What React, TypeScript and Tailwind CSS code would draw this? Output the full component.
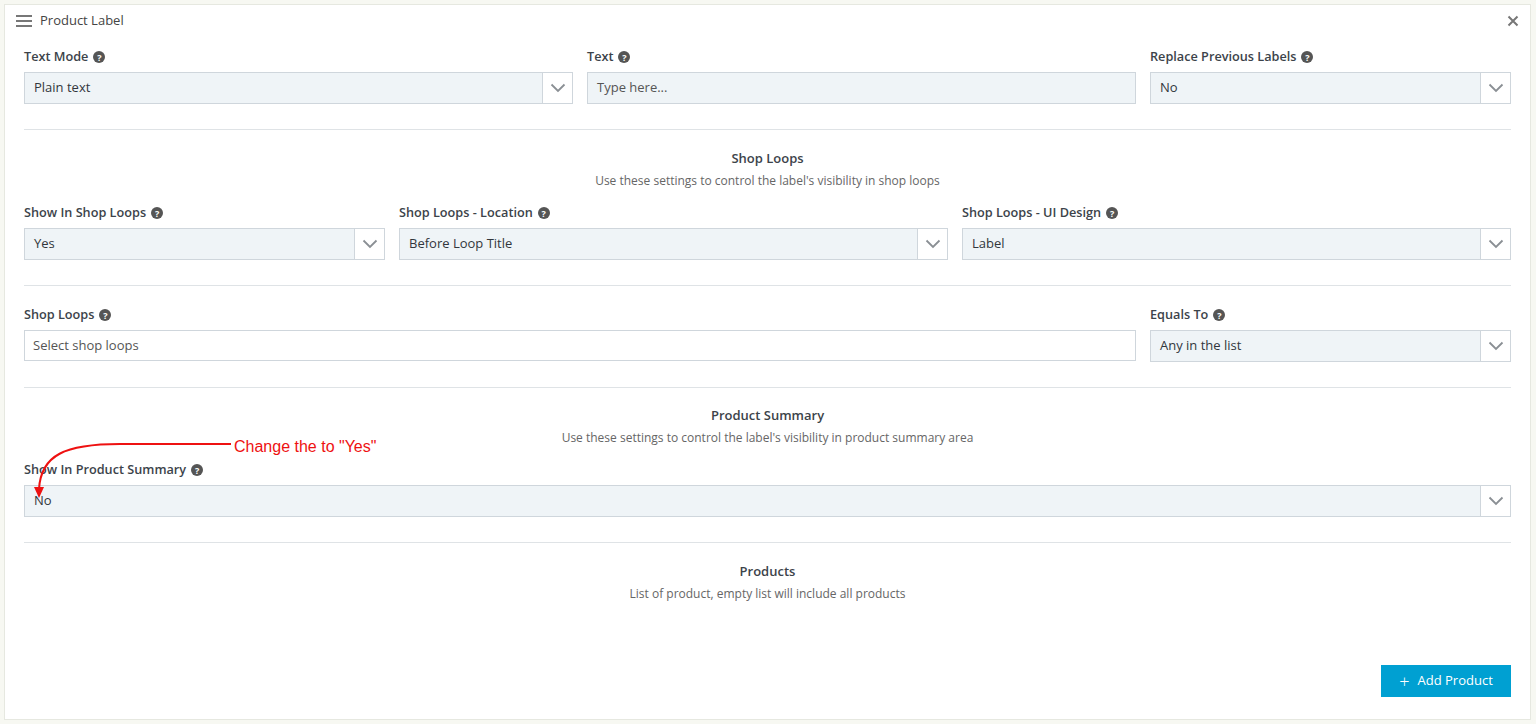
import React from "react";

const Help = () => (
  <span className="inline-flex items-center justify-center w-[12px] h-[12px] rounded-full bg-[#555] text-white text-[9px] font-bold leading-none ml-[5px]">?</span>
);

const Label = ({ t }: { t: string }) => (
  <div className="flex items-center h-[16px] mb-[7px] text-[12.7px] font-semibold text-[#3c434a]">{t}<Help /></div>
);

const Chevron = () => (
  <svg width="16" height="10" viewBox="0 0 16 10"><path d="M1.5 1.5 L8 8 L14.5 1.5" fill="none" stroke="#8a8f94" strokeWidth="1.8" /></svg>
);

const Select = ({ v }: { v: string }) => (
  <div className="flex h-[32px] border border-[#cfd6dc] bg-[#eff4f7]">
    <div className="flex-1 flex items-center px-[9px] text-[13px] text-[#32373c]">{v}</div>
    <div className="w-[30px] border-l border-[#cfd6dc] bg-white flex items-center justify-center"><Chevron /></div>
  </div>
);

const Field = ({ l, v }: { l: string; v: string }) => (
  <div><Label t={l} /><Select v={v} /></div>
);

const Heading = ({ t, s }: { t: string; s: string }) => (
  <div className="text-center">
    <div className="text-[13px] font-semibold text-[#3c434a] leading-[16px]">{t}</div>
    <div className="text-[12px] text-[#666] leading-[16px] mt-[7px]">{s}</div>
  </div>
);

const Hr = () => <div className="border-t border-[#dfe3e6]" />;

export default function App() {
  return (
    <div className="w-[1536px] h-[724px] bg-[#f7f8f2] p-[4px] pr-[5px]" style={{ fontFamily: '"Open Sans", sans-serif' }}>
      <div className="relative h-[716px] bg-white border border-[#e6e8e0] px-[19px]">
        <div className="flex items-center h-[32px] -mx-[8px]">
          <svg width="16" height="14" viewBox="0 0 16 14" className="mr-[8px]"><path d="M0 2h16M0 7h16M0 12h16" stroke="#777" strokeWidth="2" /></svg>
          <span className="text-[13px] text-[#444]">Product Label</span>
          <span className="ml-auto text-[#777]">
            <svg width="12" height="12" viewBox="0 0 12 12"><path d="M1.5 1.5l9 9M10.5 1.5l-9 9" stroke="#777" strokeWidth="2" /></svg>
          </span>
        </div>
        <div className="grid grid-cols-[549fr_549fr_361fr] gap-x-[14px] pt-[12px]">
          <Field l="Text Mode" v="Plain text" />
          <div>
            <Label t="Text" />
            <div className="flex items-center h-[32px] border border-[#cfd6dc] bg-[#eff4f7] px-[9px] text-[13px] text-[#555]">Type here...</div>
          </div>
          <Field l="Replace Previous Labels" v="No" />
        </div>
        <div className="pt-[25px] pb-[20px]"><Hr /></div>
        <Heading t="Shop Loops" s="Use these settings to control the label's visibility in shop loops" />
        <div className="grid grid-cols-[361fr_549fr_549fr] gap-x-[14px] pt-[16px]">
          <Field l="Show In Shop Loops" v="Yes" />
          <Field l="Shop Loops - Location" v="Before Loop Title" />
          <Field l="Shop Loops - UI Design" v="Label" />
        </div>
        <div className="pt-[25px] pb-[21px]"><Hr /></div>
        <div className="grid grid-cols-[1112fr_361fr] gap-x-[14px]">
          <div>
            <Label t="Shop Loops" />
            <div className="flex items-center h-[31px] border border-[#cfd6dc] bg-white px-[8px] text-[13px] text-[#555]">Select shop loops</div>
          </div>
          <Field l="Equals To" v="Any in the list" />
        </div>
        <div className="pt-[25px] pb-[19px]"><Hr /></div>
        <Heading t="Product Summary" s="Use these settings to control the label's visibility in product summary area" />
        <div className="pt-[16px]"><Field l="Show In Product Summary" v="No" /></div>
        <div className="pt-[25px] pb-[20px]"><Hr /></div>
        <Heading t="Products" s="List of product, empty list will include all products" />
        <div className="flex justify-end pt-[63px]">
          <button className="flex items-center h-[32px] w-[130px] justify-center bg-[#00a0d2] text-white text-[13px]">
            <span className="text-[18px] font-light mr-[8px] leading-none">+</span>Add Product
          </button>
        </div>
        <svg className="absolute left-0 top-0 pointer-events-none" width="400" height="520">
          <path d="M226 439 L115 439 C60 439 36 450 34 484" fill="none" stroke="#ee1111" strokeWidth="2" />
          <path d="M29 482 L34 493 L39 482 Z" fill="#ee1111" />
        </svg>
        <div className="absolute left-[229px] top-[430px] text-[16px] text-[#ee1111]" style={{ fontFamily: '"Liberation Sans", Arial, sans-serif' }}>Change the to "Yes"</div>
      </div>
    </div>
  );
}
